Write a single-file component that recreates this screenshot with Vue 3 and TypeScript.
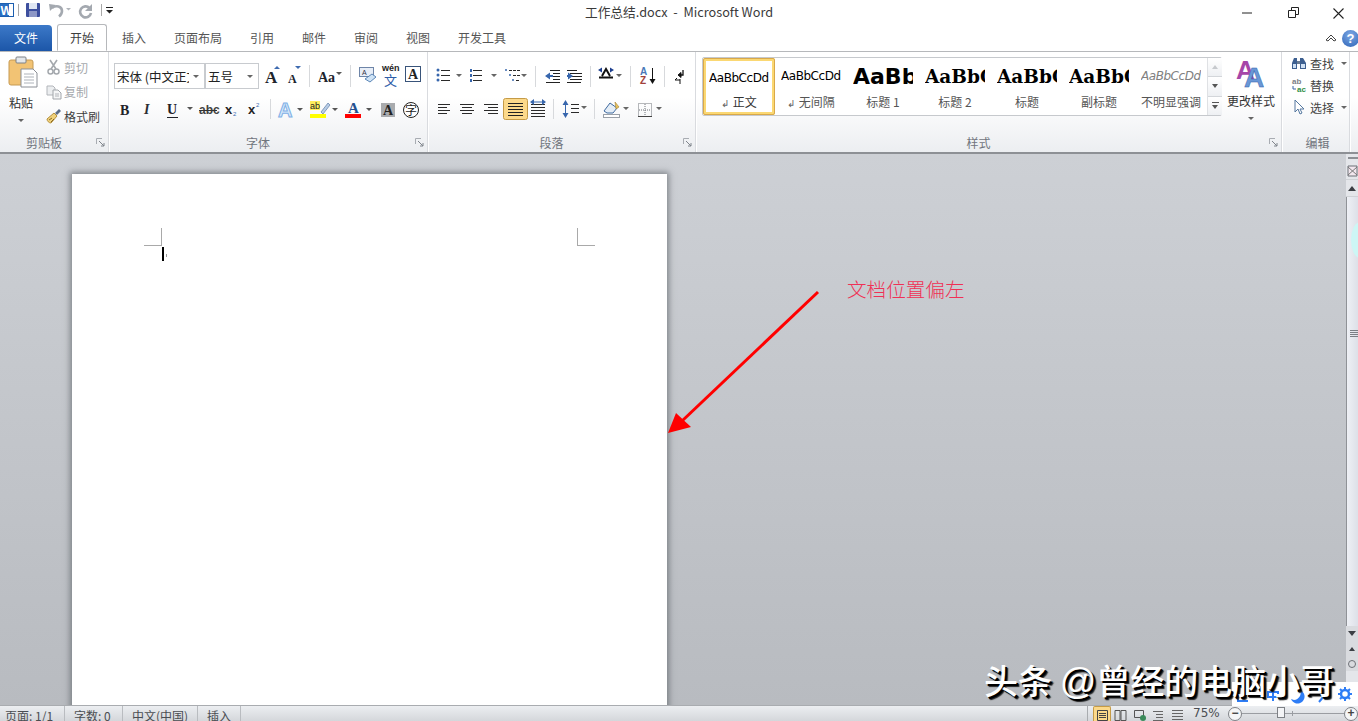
<script setup lang="ts">
interface Tab { label: string; wide: boolean }
interface Gallery { label: string; kind: string; preview: string; mark: boolean }
const tabs: Tab[] = [
  { label: '插入', wide: false },
  { label: '页面布局', wide: true },
  { label: '引用', wide: false },
  { label: '邮件', wide: false },
  { label: '审阅', wide: false },
  { label: '视图', wide: false },
  { label: '开发工具', wide: true },
]
const styles: Gallery[] = [
  { label: '正文', kind: 'normal active', preview: 'AaBbCcDd', mark: true },
  { label: '无间隔', kind: 'normal', preview: 'AaBbCcDd', mark: true },
  { label: '标题 1', kind: 'h1', preview: 'AaBb', mark: false },
  { label: '标题 2', kind: 'h2', preview: 'AaBbC', mark: false },
  { label: '标题', kind: 'h2', preview: 'AaBbC', mark: false },
  { label: '副标题', kind: 'h2', preview: 'AaBbC', mark: false },
  { label: '不明显强调', kind: 'subtle', preview: 'AaBbCcDd', mark: false },
]
</script>

<template>
  <div class="app">
    <header class="titlebar">
      <svg class="qat" width="120" height="25" viewBox="0 0 120 25">
        <rect x="0.5" y="3.5" width="13" height="13" fill="#fff" stroke="#1d5fb0"/>
        <rect x="0" y="4" width="9" height="12" fill="#2a6ec2"/>
        <text x="0.5" y="15" font-family="Liberation Sans" font-weight="700" font-size="12" fill="#fff">W</text>
        <path d="M18.5 4v12M101.500 4v12" stroke="#a8a8a8"/>
        <rect x="26" y="3" width="14" height="14" rx="1" fill="#3d4f9e"/>
        <rect x="29" y="3" width="8" height="6" fill="#dfe6f3"/>
        <rect x="29" y="11" width="8" height="6" fill="#8d97c6"/>
        <path d="M49 4l7 1-6 6z" fill="#a4a9b0"/>
        <path d="M52 8c4-3 10-2 10 3 0 2-1 4-3 5.500" fill="none" stroke="#a4a9b0" stroke-width="2.600"/>
        <path d="M66 8h5l-2.500 2.500z" fill="#b0b4ba"/>
        <path d="M92 4v7h-7z" fill="#a4a9b0"/>
        <path d="M89.500 8a5.500 5.500 0 1 0 1.500 5" fill="none" stroke="#a4a9b0" stroke-width="2.600"/>
        <path d="M106 7h7v1h-7zM106 10h7l-3.500 3.500z" fill="#222"/>
      </svg>
      <div class="doc-title">工作总结.docx&nbsp; - &nbsp;Microsoft Word</div>
      <svg class="winbtns" width="120" height="25" viewBox="0 0 120 25">
        <path d="M4 13h10" stroke="#222" stroke-width="1"/>
        <path d="M50.500 10.500h7v7h-7zM53.500 10V7.500h7v7H58" fill="none" stroke="#222"/>
        <path d="M95.500 8.500l10 10M105.500 8.500l-10 10" stroke="#222" stroke-width="1.100"/>
      </svg>
    </header>

    <nav class="tabbar">
      <div class="tab-file">文件</div>
      <div class="tab-home">开始</div>
      <div v-for="t in tabs" :key="t.label" class="tab" :class="{ wide: t.wide }">{{ t.label }}</div>
      <div class="tab-right">
        <svg width="16" height="12" viewBox="0 0 16 12"><path d="M3 8l5-5 5 5-2 1-3-3-3 3z" fill="#fff" stroke="#444"/></svg>
        <div class="help">?</div>
      </div>
    </nav>

    <section class="ribbon">
      <div class="group g-clip">
        <div class="g-body clip-body">
          <div class="paste">
            <svg width="32" height="32" viewBox="0 0 32 32">
              <rect x="2" y="4" width="24" height="25" rx="2" fill="#f2c374" stroke="#c69a52"/>
              <rect x="9" y="1" width="10" height="6" rx="1" fill="#e4e7ea" stroke="#7d8187"/>
              <path d="M14 13h12l4 4v14H14z" fill="#fff" stroke="#8b8f96"/>
              <path d="M17 18h10M17 21h10M17 24h10M17 27h10" stroke="#aeb3ba"/>
            </svg>
            <div class="paste-label">粘贴</div>
            <i class="caret"></i>
          </div>
          <div class="clip-list">
            <div class="clip-row dim">
              <svg width="16" height="16" viewBox="0 0 16 16"><path d="M4 1l6 9M11 1L5 10" stroke="#a4a8ad" stroke-width="1.600"/><circle cx="4.500" cy="12.500" r="2.500" fill="none" stroke="#a4a8ad" stroke-width="1.500"/><circle cx="10.500" cy="12.500" r="2.500" fill="none" stroke="#a4a8ad" stroke-width="1.500"/></svg>
              <span>剪切</span>
            </div>
            <div class="clip-row dim">
              <svg width="16" height="16" viewBox="0 0 16 16"><path d="M1 2h6l2 2v7H1z" fill="#eceef0" stroke="#b2b5ba"/><path d="M7 6h5l3 3v6H7z" fill="#f5f6f7" stroke="#a2a6ab"/><path d="M9 10h4M9 12h4" stroke="#b2b5ba"/></svg>
              <span>复制</span>
            </div>
            <div class="clip-row">
              <svg width="16" height="16" viewBox="0 0 16 16"><path d="M1 11l7-6 3 3-6 7c-2 0-4-2-4-4z" fill="#f0d27c" stroke="#b48f3c"/><path d="M9 5l4-4 2 2-4 4z" fill="#5c6e88"/><path d="M3 12l3-2M5 14l3-3" stroke="#8a6a24"/></svg>
              <span>格式刷</span>
            </div>
          </div>
        </div>
        <div class="g-label">剪贴板<svg class="launch" width="9" height="9" viewBox="0 0 9 9"><path d="M.5 6V.5H6" fill="none" stroke="#a8acb2"/><path d="M3 3l5 5M8 5v3H5" fill="none" stroke="#7f848b"/></svg></div>
      </div>

      <div class="group g-font">
        <div class="g-body stack">
          <div class="row">
            <div class="combos">
              <div class="combo c-name"><span class="combo-text">宋体 (中文正文)</span><i class="caret"></i></div>
              <div class="combo c-size"><span class="combo-text">五号</span><i class="caret"></i></div>
            </div>
            <svg width="166" height="26" viewBox="259 64 166 26" font-family="Liberation Serif">
              <text x="264" y="84" font-size="17" font-weight="700" fill="#20242c">A</text>
              <path d="M273 70h6l-3-3z" fill="#3e6bb0"/>
              <text x="287" y="84" font-size="12" font-weight="700" fill="#20242c">A</text>
              <path d="M294 67h6l-3 3z" fill="#3e6bb0"/>
              <path d="M308.500 66v22M349.500 66v22" stroke="#d7d9dc"/>
              <text x="317" y="83" font-size="14" font-weight="700" fill="#20242c">Aa</text>
              <path d="M335 73h6l-3 3z" fill="#555"/>
              <rect x="358.500" y="68.500" width="14" height="9" fill="#e8eef7" stroke="#6e85a8"/>
              <text x="361" y="76" font-size="7" font-family="Liberation Sans" fill="#334">A</text>
              <path d="M364 80l7-5 4 3-6 5z" fill="#cfe3f5" stroke="#5d87b8"/>
              <text x="381" y="72" font-size="9" font-weight="700" font-family="Liberation Sans" fill="#222">wén</text>
              <text x="383" y="86" font-size="13" font-family="Noto Sans CJK SC" fill="#2d5da8">文</text>
              <rect x="404.500" y="67.500" width="15" height="15" fill="#fff" stroke="#39547a"/>
              <text x="407" y="80" font-size="14" font-weight="700" fill="#222">A</text>
            </svg>
          </div>
          <svg class="row2" width="312" height="24" viewBox="114 98 312 24" font-family="Liberation Serif">
            <text x="120" y="116" font-size="14" font-weight="900" fill="#1f2228">B</text>
            <text x="144" y="115" font-size="14" font-style="italic" font-weight="700" fill="#2a2d33">I</text>
            <text x="167" y="115" font-size="14" font-weight="700" fill="#1f2228">U</text>
            <path d="M167 118.500h11" stroke="#1f2228"/>
            <path d="M187 108h6l-3 3z" fill="#555"/>
            <text x="199" y="115" font-size="12" font-family="Liberation Sans" font-weight="700" fill="#444">abc</text>
            <path d="M199 111.500h18" stroke="#333"/>
            <text x="225" y="115" font-size="13" font-family="Liberation Sans" font-weight="700" fill="#222">x</text>
            <text x="233" y="117" font-size="6" font-family="Liberation Sans" fill="#3e6bb0">2</text>
            <text x="248" y="115" font-size="13" font-family="Liberation Sans" font-weight="700" fill="#222">x</text>
            <text x="256" y="108" font-size="6" font-family="Liberation Sans" fill="#3e6bb0">2</text>
            <path d="M270.500 100v20" stroke="#d7d9dc"/>
            <text x="278" y="118" font-size="20" font-family="Liberation Sans" font-weight="700" fill="#d5e8fa" stroke="#7fb0e6" stroke-width="1">A</text>
            <path d="M297 109h6l-3 3z" fill="#555"/>
            <rect x="310" y="102" width="10" height="9" fill="#ffef5e"/>
            <text x="310" y="110" font-size="9" font-family="Liberation Sans" fill="#222">ab</text>
            <path d="M321 113l7-9 2 2-7 9z" fill="#b9cde6" stroke="#5d7ca6" stroke-width=".7"/>
            <rect x="310" y="115" width="16" height="4" fill="#ffff00"/>
            <path d="M332 109h6l-3 3z" fill="#555"/>
            <text x="348" y="114" font-size="15" font-weight="700" fill="#24508f">A</text>
            <rect x="345" y="115" width="16" height="4" fill="#f00"/>
            <path d="M366 109h6l-3 3z" fill="#555"/>
            <rect x="381" y="104" width="14" height="14" fill="#a9abae"/>
            <text x="383" y="116" font-size="14" font-weight="700" fill="#222">A</text>
            <circle cx="411" cy="111" r="7.500" fill="#fff" stroke="#222"/>
            <text x="405" y="116" font-size="12" font-family="Noto Sans CJK SC" fill="#222">字</text>
          </svg>
        </div>
        <div class="g-label">字体<svg class="launch" width="9" height="9" viewBox="0 0 9 9"><path d="M.5 6V.5H6" fill="none" stroke="#a8acb2"/><path d="M3 3l5 5M8 5v3H5" fill="none" stroke="#7f848b"/></svg></div>
      </div>

      <div class="group g-para">
        <div class="g-body para-body">
          <svg width="267" height="60" viewBox="428 64 267 60">
            <g fill="none" stroke="#2a2a2a">
              <path d="M441 71.500h9M441 76.500h9M441 81.500h9"/>
              <path d="M473 71.500h9M473 76.500h9M473 81.500h9"/>
              <path d="M509 71.500h11M513 76.500h7M516 81.500h4" stroke-dasharray="3 1"/>
              <path d="M438 105.500h12M438 108.500h9M438 111.500h12M438 114.500h9"/>
              <path d="M460 105.500h14M462 108.500h10M460 111.500h14M462 114.500h10"/>
              <path d="M484 105.500h14M488 108.500h10M484 111.500h14M488 114.500h10"/>
              <path d="M531 105.500h14M531 108.500h14M531 111.500h14M531 114.500h14M531 117.500h14"/>
              <path d="M571 105.500h8M571 109.500h8M571 113.500h8"/>
            </g>
            <!-- indent -->
            <path d="M550 71.500h10M553 74.500h7M553 77.500h7M553 80.500h7M546 83.500h14" stroke="#222" fill="none"/>
            <path d="M567 71.500h10M570 74.500h12M570 77.500h12M570 80.500h12M567 83.500h14" stroke="#222" fill="none"/>
            <path d="M545 77l5-3.500v2.500h3v2h-3v2.500zM573 77l-5-3.500v2.500h-1v2h1v2.500z" fill="#3766ad"/>
            <!-- text direction -->
            <path d="M599 78.500h14M602 77l4-7 4 7" fill="none" stroke="#111" stroke-width="2"/>
            <path d="M598 71l4-2.500v5zM614 71l-4-2.500v5z" fill="#1d3f8f"/>
            <!-- sort -->
            <text x="640" y="76" font-size="10" font-weight="700" font-family="Liberation Sans" fill="#4a78b8">A</text>
            <text x="640" y="85" font-size="10" font-weight="700" font-family="Liberation Sans" fill="#a2423c">Z</text>
            <path d="M652.500 69v15" stroke="#111"/>
            <path d="M649.500 80l3 5 3-5z" fill="#111"/>
            <!-- pilcrow mark -->
            <path d="M683 71v5h-4" fill="none" stroke="#111" stroke-width="1.300"/>
            <path d="M678 76l3-2.500v5zM675 81h5M675 81l2-2M680 85v-5" fill="#111" stroke="#111"/>
            <g fill="#3766ad">
              <circle cx="438" cy="71" r="1.500"/><circle cx="438" cy="76" r="1.500"/><circle cx="438" cy="81" r="1.500"/>
              <circle cx="506" cy="71" r="1"/><circle cx="510" cy="76" r="1"/><circle cx="513" cy="81" r="1"/>
              <rect x="470" y="70" width="2" height="3"/><rect x="470" y="75" width="2" height="3"/><rect x="470" y="80" width="2" height="3"/>
              <path d="M565.500 101l-3 5h6zM565.500 119l-3-5h6z"/>
              <path d="M530 103l4-3v6zM546 103l-4-3v6z"/>
            </g>
            <path d="M534 103h8" stroke="#3766ad"/>
            <path d="M565.500 105v10" stroke="#3766ad"/>
            <g fill="#666">
              <path d="M456 75h6l-3 3zM491 75h6l-3 3zM521 75h6l-3 3zM616 75h6l-3 3zM581 107h6l-3 3zM623 108h6l-3 3zM656 108h6l-3 3z"/>
            </g>
            <path d="M535.500 67v21M590.500 67v21M630.500 67v21M664.500 67v21M553.500 100v20M594.500 100v20" stroke="#d7d9dc"/>
            <rect x="503.500" y="99.500" width="24" height="21" rx="2" fill="#fcd98a" stroke="#c59b47"/>
            <path d="M508 104.500h15M508 107.500h15M508 110.500h15M508 113.500h15M508 116.500h15" stroke="#222"/>
            <path d="M604 112l6-8 7 5-4 5h-6z" fill="#e4edf6" stroke="#3f6aa0"/>
            <path d="M615 103l4 5-3 2z" fill="#e8c35f" stroke="#a37f2c" stroke-width=".6"/>
            <rect x="603.500" y="115.500" width="16" height="3" fill="#fff" stroke="#9aa0a8"/>
            <path d="M638.500 104.500h13v13h-13zM645 105v12M639 111h12" fill="none" stroke="#6f7278" stroke-dasharray="1 1"/>
            <path d="M638 117.500h14" stroke="#444"/>
          </svg>
        </div>
        <div class="g-label">段落<svg class="launch" width="9" height="9" viewBox="0 0 9 9"><path d="M.5 6V.5H6" fill="none" stroke="#a8acb2"/><path d="M3 3l5 5M8 5v3H5" fill="none" stroke="#7f848b"/></svg></div>
      </div>

      <div class="group g-styles">
        <div class="g-body styles-body">
          <div class="gallery">
            <div class="cells">
              <div v-for="s in styles" :key="s.label" class="cell" :class="s.kind">
                <div class="preview">{{ s.preview }}</div>
                <div class="cell-label"><span v-if="s.mark" class="mark">↲</span>{{ s.label }}</div>
              </div>
            </div>
            <div class="spin">
              <div class="spin-btn"><i class="up dimmed"></i></div>
              <div class="spin-btn"><i class="down"></i></div>
              <div class="spin-btn more"><i class="bar"></i><i class="down"></i></div>
            </div>
          </div>
          <div class="change">
            <svg width="32" height="32" viewBox="0 0 32 32" font-family="Liberation Sans" font-weight="700">
              <text x="1" y="22" font-size="26" fill="#a646a8">A</text>
              <text x="9" y="30" font-size="28" fill="#6a97d6" stroke="#2f62ab" stroke-width=".5">A</text>
            </svg>
            <div class="change-label">更改样式</div>
            <i class="caret"></i>
          </div>
        </div>
        <div class="g-label">样式<svg class="launch" width="9" height="9" viewBox="0 0 9 9"><path d="M.5 6V.5H6" fill="none" stroke="#a8acb2"/><path d="M3 3l5 5M8 5v3H5" fill="none" stroke="#7f848b"/></svg></div>
      </div>

      <div class="group g-edit">
        <div class="g-body edit-body">
          <div class="edit-row">
            <svg width="16" height="14" viewBox="0 0 16 14"><path d="M1 13V7l2-5h3v11zM9 13V2h3l3 5v6z" fill="#3d5f90"/><rect x="2" y="8" width="3" height="4" fill="#cfe0f3"/><rect x="10" y="8" width="4" height="4" fill="#cfe0f3"/><path d="M6 5h3v3H6z" fill="#6a7b92"/></svg>
            <span>查找</span><i class="caret"></i>
          </div>
          <div class="edit-row">
            <svg width="16" height="16" viewBox="0 0 16 16" font-family="Liberation Sans" font-size="8" font-weight="700"><text x="1" y="7" fill="#7c8087">ab</text><text x="6" y="14.500" fill="#2f8f46">ac</text><path d="M2 9v3h3" fill="none" stroke="#3d66a8"/></svg>
            <span>替换</span>
          </div>
          <div class="edit-row">
            <svg width="16" height="16" viewBox="0 0 16 16"><path d="M4 1v12l3-3 2 5 2-1-2-4h4z" fill="#fff" stroke="#54779f"/></svg>
            <span>选择</span><i class="caret"></i>
          </div>
        </div>
        <div class="g-label edit-label">编辑</div>
      </div>
      <div class="ribbon-end"></div>
    </section>

    <main class="workspace">
      <div class="docarea">
        <div class="page">
          <svg class="marks" width="451" height="36" viewBox="0 0 451 36">
            <path d="M0 17.500h18M17.500 0v18M433.500 0v18M433 17.500h18" stroke="#a9a9a9"/>
            <rect x="18" y="19" width="2" height="14" fill="#000"/>
            <rect x="22" y="26" width="1" height="3" fill="#999"/>
          </svg>
        </div>
        <svg class="arrow" width="160" height="150" viewBox="0 0 160 150">
          <path d="M150 4L14 133" stroke="#f00" stroke-width="3"/>
          <path d="M0 145l8-20 15 14z" fill="#f00"/>
        </svg>
        <div class="note">文档位置偏左</div>
      </div>
      <aside class="vscroll">
        <div class="vs-split"><i></i></div>
        <div class="vs-btn ruler">
          <svg width="11" height="14" viewBox="0 0 11 14"><path d="M1 2l9 0v10H1z" fill="#f2e7ee" stroke="#6d7076"/><path d="M1 3l9 8M10 3l-9 8" stroke="#777"/></svg>
        </div>
        <div class="vs-btn"><i class="tri-up"></i></div>
        <div class="vs-thumb"><span class="blob"></span><span class="grip"></span></div>
        <div class="vs-btn low"><i class="tri-down"></i></div>
        <div class="vs-btn low"><i class="tri-up small"></i></div>
        <div class="vs-btn low"><i class="dot"></i></div>
        <div class="vs-rest"></div>
      </aside>
    </main>

    <footer class="status">
      <span class="st first">页面: 1/1</span>
      <span class="st second">字数: 0</span>
      <span class="st third">中文(中国)</span>
      <span class="st fourth">插入</span>
      <div class="st-right">
        <div class="view active">
          <svg width="13" height="12" viewBox="0 0 13 12"><path d="M1.500 1.500h10v10h-10zM3 4.500h7M3 6.500h7M3 8.500h7" fill="none" stroke="#444"/></svg>
        </div>
        <svg class="view-ic" width="13" height="12" viewBox="0 0 13 12"><path d="M1 1.500h5v10H1zM7 1.500h5v10H7z" fill="none" stroke="#555"/></svg>
        <svg class="view-ic" width="13" height="12" viewBox="0 0 13 12"><path d="M1.500 1.500h9v7h-9z" fill="none" stroke="#555"/><circle cx="10" cy="9" r="3" fill="#3a8a5a"/></svg>
        <svg class="view-ic" width="13" height="12" viewBox="0 0 13 12"><path d="M1 2.500h10M4 5.500h7M4 8.500h7M1 11.500h10" stroke="#666"/></svg>
        <svg class="view-ic" width="13" height="12" viewBox="0 0 13 12"><path d="M1 1.500h11M1 4.500h11M1 7.500h11M1 10.500h11" stroke="#666"/></svg>
        <span class="zoomval">75%</span>
        <div class="zoomctl">
          <span class="round">−</span>
          <div class="slider"><i class="mid"></i><i class="thumb"></i></div>
          <span class="round">+</span>
        </div>
      </div>
    </footer>

    <div class="ime">
      <svg width="126" height="24" viewBox="0 0 126 24">
        <path d="M6 7v12h10" fill="none" stroke="#2e7df6" stroke-width="2"/>
        <path d="M36 10h10v5H36zM41 6v13" fill="none" stroke="#2e7df6" stroke-width="2"/>
        <path d="M62 18a7 7 0 0 0 6-10 7 7 0 1 1-9 9z" fill="#2e7df6"/>
        <path d="M92 14l-5 6" stroke="#2e7df6" stroke-width="2"/>
        <g fill="none" stroke="#2e7df6">
          <circle cx="113" cy="12" r="4" stroke-width="2.500"/>
          <path d="M113 5v3M113 16v3M106 12h3M117 12h3M108 7l2 2M116 15l2 2M118 7l-2 2M110 15l-2 2" stroke-width="2"/>
        </g>
      </svg>
    </div>
    <div class="watermark">头条 <span class="at">@</span>曾经的电脑小哥</div>
  </div>
</template>

<style>
html, body { margin: 0; overflow: hidden; background: #fff; }
</style>

<style scoped>
.app {
  position: relative;
  width: 1358px;
  height: 721px;
  overflow: hidden;
  display: flex;
  flex-direction: column;
  font-family: "Noto Sans CJK SC", "Liberation Sans", sans-serif;
  font-size: 12px;
  color: #444;
}
svg { display: block; flex: none; }
i { display: block; }
.titlebar {
  height: 25px;
  flex: none;
  display: flex;
  justify-content: space-between;
  align-items: flex-start;
  background: #fff;
}
.doc-title {
  font-size: 12.700px;
  line-height: 24px;
  color: #3a3a3a;
  margin-left: 459px;
  width: 200px;
  text-align: center;
  white-space: nowrap;
  flex: none;
}
.winbtns { margin-left: auto; }
.tabbar {
  height: 27px;
  flex: none;
  display: flex;
  align-items: stretch;
  background: #fff;
  border-bottom: 1px solid #b6b8bb;
  box-sizing: border-box;
}
.tab-file {
  width: 52px;
  margin-right: 5px;
  background: linear-gradient(#3c79c8, #1c56a8);
  border-radius: 0 4px 0 0;
  color: #fff;
  text-align: center;
  line-height: 26px;
  font-size: 12px;
  height: 26px;
}
.tab-home {
  width: 50px;
  height: 27px;
  margin-top: -1px;
  margin-right: 1px;
  box-sizing: border-box;
  border: 1px solid #b6b8bb;
  border-bottom: 1px solid #fff;
  border-radius: 3px 3px 0 0;
  background: #fff;
  text-align: center;
  line-height: 26px;
  color: #3d3d3d;
}
.tab { width: 52px; text-align: center; line-height: 26px; color: #555; }
.tab.wide { width: 76px; }
.tab-right { margin-left: auto; display: flex; align-items: center; gap: 3px; }
.help {
  width: 17px;
  height: 17px;
  border-radius: 50%;
  margin-right: -1px;
  background: radial-gradient(circle at 50% 30%, #7da7e4, #2f66b8);
  color: #fff;
  font: 700 13px/17px "Liberation Sans", sans-serif;
  text-align: center;
}
.ribbon {
  height: 102px;
  flex: none;
  display: flex;
  box-sizing: border-box;
  border-bottom: 2px solid #8d9095;
  background: linear-gradient(#fff 45%, #eceef1 100%);
}
.group {
  flex: none;
  display: flex;
  flex-direction: column;
  box-sizing: border-box;
  border-right: 1px solid #d9dbdf;
  box-shadow: 1px 0 0 #fff;
}
.g-clip { width: 109px; }
.g-font { width: 319px; }
.g-para { width: 268px; }
.g-styles { width: 586px; }
.g-edit { width: 68px; }
.ribbon-end { flex: 1; }
.g-body { flex: 1; min-height: 0; }
.g-label {
  position: relative;
  height: 19px;
  line-height: 20px;
  padding-right: 20px;
  text-align: center;
  color: #70757d;
  flex: none;
}
.edit-label { padding: 0 0 0 4px; }
.launch { position: absolute; right: 3px; top: 5px; }
.caret {
  width: 0;
  height: 0;
  border-left: 3px solid transparent;
  border-right: 3px solid transparent;
  border-top: 3px solid #666;
}
.clip-body { display: flex; }
.paste {
  width: 42px;
  padding: 4px 0 0 7px;
  box-sizing: border-box;
  display: flex;
  flex-direction: column;
  align-items: flex-start;
}
.paste-label { margin: 5px 0 0 2px; line-height: 20px; font-size: 12px; color: #333; }
.paste .caret { margin: 6px 0 0 11px; }
.clip-list { padding-top: 3px; margin-left: 4px; }
.clip-row { display: flex; align-items: center; gap: 2px; height: 24.500px; color: #3e3e3e; white-space: nowrap; }
.clip-row.dim { color: #a6a9ad; }
.stack { padding: 11px 0 0 5px; box-sizing: border-box; }
.row { display: flex; }
.row2 { margin-top: 8px; }
.combos { display: flex; gap: 0; height: 26px; }
.combo {
  box-sizing: border-box;
  height: 26px;
  border: 1px solid #c8cbcf;
  background: #fff;
  display: flex;
  align-items: center;
  overflow: hidden;
}
.c-name { width: 91px; }
.c-size { width: 54px; margin-right: 1px; }
.combo-text {
  flex: 1;
  min-width: 0;
  overflow: hidden;
  white-space: nowrap;
  padding-left: 2px;
  font-size: 12.500px;
  color: #222;
}
.combo .caret { margin: 0 5px 0 4px; flex: none; }
.para-body { padding-top: 11px; box-sizing: border-box; }
.styles-body { display: flex; padding: 5px 0 0 6px; box-sizing: border-box; }
.gallery {
  width: 520px;
  height: 59px;
  box-sizing: border-box;
  border: 1px solid #c6c9cd;
  border-radius: 2px;
  background: #fff;
  display: flex;
}
.cells { display: flex; width: 505px; }
.cell {
  width: 72px;
  height: 57px;
  flex: none;
  box-sizing: border-box;
  padding: 0 6px;
  overflow: hidden;
  text-align: center;
}
.cell.active {
  background: #fff;
  border: 3px solid #fbd873;
  outline: 1px solid #d9a94a;
  outline-offset: -1px;
  border-radius: 2px;
  padding: 0 3px;
}
.preview {
  height: 35px;
  line-height: 37px;
  white-space: nowrap;
  overflow: hidden;
  text-align: left;
  color: #000;
  font-family: "DejaVu Sans", sans-serif;
  font-size: 12px;
  letter-spacing: -0.45px;
}
.active .preview { height: 32px; line-height: 34px; }
.h1 .preview { font-weight: 700; font-size: 22px; letter-spacing: 0; }
.h2 .preview { font-family: "DejaVu Serif", serif; font-weight: 700; font-size: 18.500px; letter-spacing: 0; }
.subtle .preview { font-style: italic; color: #808080; }
.cell-label { line-height: 18px; white-space: nowrap; color: #555; }
.active .cell-label { color: #333; }
.mark { font: 10px "DejaVu Sans", sans-serif; margin-right: 3px; color: #666; }
.spin { width: 14px; flex: none; border-left: 1px solid #dfe1e4; display: flex; flex-direction: column; }
.spin-btn {
  flex: 1;
  display: flex;
  flex-direction: column;
  align-items: center;
  justify-content: center;
  gap: 2px;
  border-bottom: 1px solid #d3d6da;
  background: linear-gradient(#fff, #eef0f3);
}
.spin-btn:last-child { border-bottom: none; }
.up { width: 0; height: 0; border: 3px solid transparent; border-top: 0; border-bottom: 4px solid #555; }
.up.dimmed { border-bottom-color: #c6c9cd; }
.down { width: 0; height: 0; border: 3px solid transparent; border-bottom: 0; border-top: 4px solid #555; }
.bar { width: 7px; height: 1px; background: #555; }
.change {
  width: 58px;
  flex: none;
  display: flex;
  flex-direction: column;
  align-items: center;
}
.change-label { margin-top: 2px; line-height: 20px; white-space: nowrap; color: #333; }
.change .caret { margin-top: 6px; }
.edit-body { padding: 0 0 0 9px; box-sizing: border-box; }
.edit-row { display: flex; align-items: center; gap: 3px; height: 22px; color: #444; white-space: nowrap; }
.edit-row .caret { margin-left: 4px; }
.edit-row svg { width: 16px; }
.workspace {
  flex: 1;
  min-height: 0;
  display: flex;
  background: linear-gradient(#cdd0d5, #b8bbc0);
}
.docarea { position: relative; flex: 1; min-width: 0; overflow: hidden; }
.page {
  width: 595px;
  height: 100%;
  margin: 20px 0 0 72px;
  padding: 54px 0 0 72px;
  box-sizing: border-box;
  background: #fff;
  box-shadow: 0 0 6px 2px rgba(70, 74, 80, .55);
}
.arrow { position: absolute; left: 668px; top: 134px; }
.note {
  position: absolute;
  left: 847px;
  top: 121px;
  font-size: 19.600px;
  line-height: 28px;
  white-space: nowrap;
  color: #f03055;
  font-weight: 300;
}
.vscroll {
  width: 12px;
  flex: none;
  display: flex;
  flex-direction: column;
  background: #e4e6ea;
}
.vs-split { height: 9px; padding-top: 3px; box-sizing: border-box; }
.vs-split i { height: 2px; background: #8d9095; margin-left: 2px; }
.vs-btn {
  height: 17px;
  flex: none;
  box-sizing: border-box;
  border-bottom: 1px solid #cfd2d6;
  display: flex;
  align-items: center;
  justify-content: center;
}
.vs-btn.low { height: 15px; border-bottom: none; background: #d9dbdf; }
.tri-up { width: 0; height: 0; border: 4px solid transparent; border-top: 0; border-bottom: 5px solid #3c3f44; }
.tri-up.small { border-width: 3px; border-top: 0; border-bottom: 4px solid #3c3f44; }
.tri-down { width: 0; height: 0; border: 4px solid transparent; border-bottom: 0; border-top: 5px solid #3c3f44; }
.dot { width: 6px; height: 6px; border-radius: 50%; border: 1px solid #6d7076; }
.vs-thumb {
  position: relative;
  flex: 1;
  min-height: 0;
  box-sizing: border-box;
  border-left: 1px solid #8f9297;
  overflow: hidden;
  background: linear-gradient(90deg, #eef0f5, #dde0e8);
}
.blob {
  position: absolute;
  left: 4px;
  top: 25px;
  width: 18px;
  height: 36px;
  border-radius: 50%;
  background: #cdf6f5;
}
.grip {
  position: absolute;
  left: 3px;
  right: 0;
  top: 133px;
  height: 7px;
  background: repeating-linear-gradient(#7b7f85 0 1px, transparent 1px 2px);
}
.vs-rest { height: 34px; flex: none; }
.status {
  height: 16px;
  flex: none;
  box-sizing: border-box;
  border-top: 1px solid #a9acb0;
  background: linear-gradient(#eceef1, #d4d7db);
  display: flex;
  align-items: flex-start;
  overflow: hidden;
  position: relative;
}
.st {
  height: 16px;
  line-height: 19px;
  box-sizing: border-box;
  border-right: 1px solid #b9bcc0;
  white-space: nowrap;
  color: #4a4d52;
  padding-left: 5px;
  flex: none;
}
.first { width: 65px; }
.second { width: 58px; padding-left: 9px; }
.third { width: 75px; padding-left: 9px; }
.fourth { width: 43px; padding-left: 9px; }
.st-right {
  margin-left: auto;
  display: flex;
  align-items: center;
  height: 15px;
  padding-left: 5px;
  border-left: 1px solid #a9acb0;
}
.view {
  width: 18px;
  height: 15px;
  box-sizing: border-box;
  display: flex;
  justify-content: center;
  align-items: flex-start;
  padding-top: 2px;
}
.view.active { background: #fcd98a; border: 1px solid #c59b47; border-bottom: none; border-radius: 2px 2px 0 0; }
.view-ic { margin: 3px 3px 0 3px; width: 13px; }
.zoomval { margin-left: 6px; width: 35px; line-height: 19px; font-size: 12px; font-family: "DejaVu Sans", sans-serif; color: #4a4d52; }
.zoomctl { display: flex; align-items: flex-start; padding-top: 1px; height: 15px; box-sizing: border-box; }
.round {
  width: 14px;
  height: 14px;
  box-sizing: border-box;
  border: 1px solid #7e8186;
  border-radius: 50%;
  background: #f5f6f7;
  font: 700 12px/11px "Liberation Sans", sans-serif;
  color: #444;
  text-align: center;
  flex: none;
}
.slider { position: relative; width: 102px; height: 14px; flex: none; }
.slider::before { content: ""; position: absolute; left: 0; right: 0; top: 6px; height: 1px; background: #9a9da2; }
.mid { position: absolute; left: 49%; top: 4px; width: 1px; height: 5px; background: #9a9da2; }
.thumb {
  position: absolute;
  left: 35px;
  top: 0;
  width: 8px;
  height: 11px;
  box-sizing: border-box;
  border: 1px solid #7e8186;
  background: #f3f4f6;
}
.ime {
  position: absolute;
  left: 1232px;
  top: 682px;
  width: 126px;
  height: 24px;
  background: #fff;
}
.watermark {
  position: absolute;
  left: 984px;
  top: 656px;
  font-size: 34px;
  font-weight: 500;
  line-height: 48px;
  white-space: nowrap;
  color: #fff;
  text-shadow: 2px 2px 0 #000, 3px 3px 1px #222;
}
.at { font-family: "Liberation Sans", sans-serif; font-size: 36px; font-weight: 400; line-height: 1; }
</style>
